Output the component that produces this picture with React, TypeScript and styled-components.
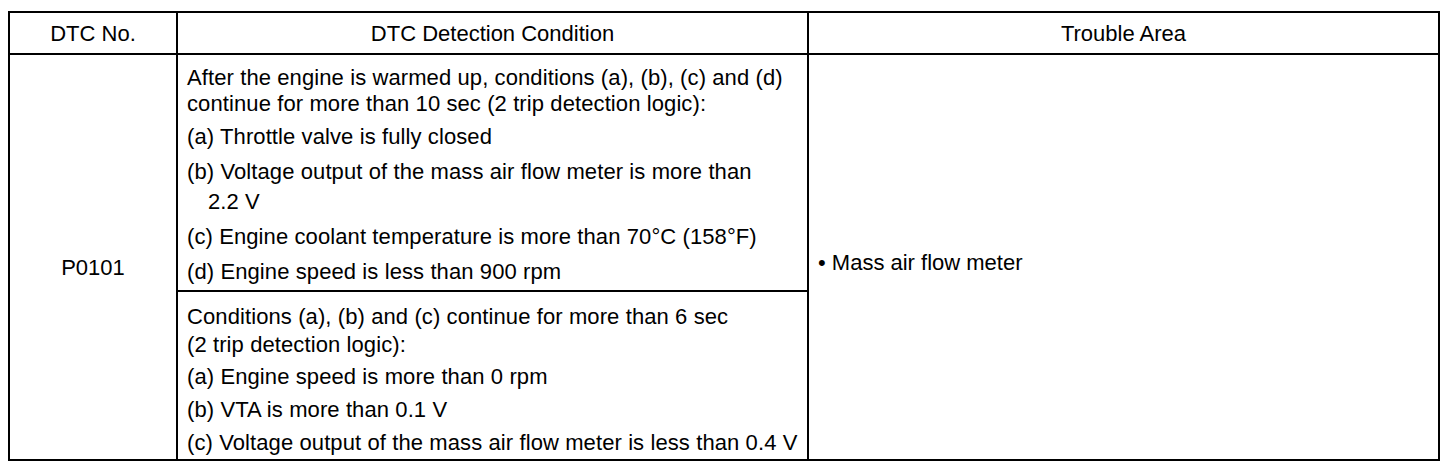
import React from "react";
import styled, { createGlobalStyle } from "styled-components";

const Global = createGlobalStyle`
  html, body { padding: 0; background: #fff; }
  body { margin: 8px; font-family: "Liberation Sans", Arial, sans-serif; color: #000; }
`;

const Table = styled.div`
  margin-top: 3px;
  width: 1432px;
  box-sizing: border-box;
  display: grid;
  grid-template-columns: 166px 629px 629px;
  grid-template-rows: 40px 235px 167px;
  gap: 2px;
  padding: 2px;
  background: #000;
  font-size: 22px;
`;

const HeadCell = styled.div`
  background: #fff;
  display: flex;
  align-items: center;
  justify-content: center;
  padding-top: 2px;
`;

const SpanCell = styled.div<{ $center?: boolean; $shift: number }>`
  grid-row: 2 / span 2;
  background: #fff;
  display: flex;
  align-items: center;
  justify-content: ${(p) => (p.$center ? "center" : "flex-start")};
  padding: ${(p) => p.$shift}px 9px 0;
  white-space: nowrap;
`;

const CondCell = styled.div<{ $gap: number; $top: number }>`
  background: #fff;
  padding: ${(p) => p.$top}px 0 0 9px;
  display: flex;
  flex-direction: column;
  gap: ${(p) => p.$gap}px;
  white-space: nowrap;
  letter-spacing: 0.1px;
`;

const Para = styled.div<{ $lh: number }>`
  line-height: ${(p) => p.$lh}px;
`;

const Cont = styled.span`
  display: block;
  padding-left: 21px;
`;

export default function App() {
  return (
    <>
      <Global />
      <Table>
        <HeadCell>DTC No.</HeadCell>
        <HeadCell>DTC Detection Condition</HeadCell>
        <HeadCell>Trouble Area</HeadCell>
        <SpanCell $center $shift={22}>P0101</SpanCell>
        <CondCell $gap={5} $top={10}>
          <Para $lh={26}>
            After the engine is warmed up, conditions (a), (b), (c) and (d)
            <br />
            continue for more than 10 sec (2 trip detection logic):
          </Para>
          <Para $lh={30}>(a) Throttle valve is fully closed</Para>
          <Para $lh={30}>
            (b) Voltage output of the mass air flow meter is more than
            <Cont>2.2 V</Cont>
          </Para>
          <Para $lh={30}>(c) Engine coolant temperature is more than 70°C (158°F)</Para>
          <Para $lh={30}>(d) Engine speed is less than 900 rpm</Para>
        </CondCell>
        <SpanCell style={{ gridColumn: 3 }} $shift={12}>• Mass air flow meter</SpanCell>
        <CondCell $gap={3} $top={11}>
          <Para $lh={28}>
            Conditions (a), (b) and (c) continue for more than 6 sec
            <br />
            (2 trip detection logic):
          </Para>
          <Para $lh={30}>(a) Engine speed is more than 0 rpm</Para>
          <Para $lh={30}>(b) VTA is more than 0.1 V</Para>
          <Para $lh={30}>(c) Voltage output of the mass air flow meter is less than 0.4 V</Para>
        </CondCell>
      </Table>
    </>
  );
}
